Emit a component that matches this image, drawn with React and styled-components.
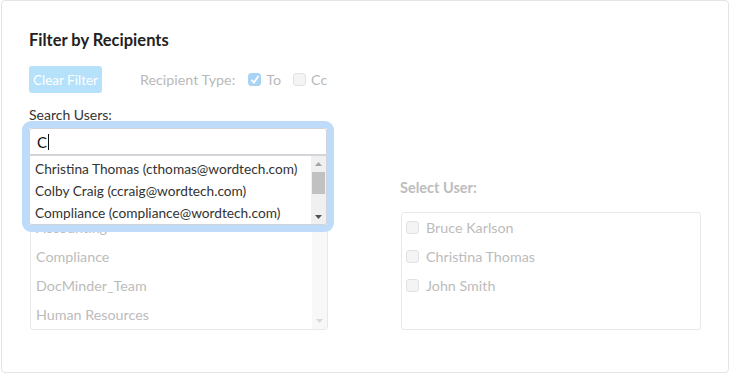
import React from "react";
import styled, { createGlobalStyle } from "styled-components";

const Global = createGlobalStyle`
  html, body {
    margin: 0;
    padding: 0;
    background: #ffffff;
  }
  body {
    font-family: "Lato", "Noto Sans", sans-serif;
    color: #333;
  }
`;

const Card = styled.div`
  box-sizing: border-box;
  width: 728px;
  height: 373px;
  margin-left: 1px;
  border: 1px solid #e2e4e6;
  border-radius: 4px;
  padding: 29px 27px 0 28px;
  background: white;
`;

const Title = styled.div`
  font-size: 16.5px;
  font-weight: bold;
  line-height: 20px;
  color: #222;
  margin-left: -1px;
`;

const Toolbar = styled.div`
  display: flex;
  align-items: center;
  margin-top: 16px;
  margin-left: -1px;
  height: 27px;
`;

const ClearButton = styled.button`
  box-sizing: border-box;
  height: 27px;
  width: 73px;
  padding: 0;
  border: none;
  border-radius: 3px;
  background: #b5e1fa;
  color: #ffffff;
  font-family: inherit;
  font-size: 13.5px;
`;

const TypeLabel = styled.span`
  margin-left: 38px;
  margin-right: 13px;
  font-size: 14.3px;
  color: #b9b9b9;
`;

const Check = styled.span`
  box-sizing: border-box;
  display: inline-flex;
  align-items: center;
  justify-content: center;
  width: 13px;
  height: 13px;
  border-radius: 3px;
  border: 1px solid ${(p) => (p.checked ? "#a9d3f5" : "#e2e2e2")};
  background: ${(p) => (p.checked ? "#a9d3f5" : "#f4f4f4")};
  flex-shrink: 0;
`;

const CheckText = styled.span`
  margin-left: 5px;
  margin-right: 12px;
  font-size: 14.3px;
  color: #b9b9b9;
`;

const FieldLabel = styled.div`
  margin-top: 13px;
  margin-left: -1px;
  font-size: 14px;
  line-height: 17px;
  color: #333;
`;

const SearchArea = styled.div`
  position: relative;
  margin-top: 5px;
  width: 298px;
  height: 27px;
`;

const FocusRing = styled.div`
  position: absolute;
  top: -7px;
  left: -8px;
  z-index: 5;
  width: 298px;
  border: 7px solid #bedcfa;
  border-radius: 9px;
  background: #ffffff;
`;

const SearchInput = styled.div`
  box-sizing: border-box;
  height: 27px;
  border: 1px solid #cfd4da;
  border-radius: 3px 3px 0 0;
  padding: 0 7px;
  display: flex;
  align-items: center;
  font-size: 15px;
  color: #111;
`;

const Caret = styled.span`
  display: inline-block;
  width: 1px;
  height: 16px;
  margin-left: 1px;
  background: #111;
`;

const Suggestions = styled.div`
  box-sizing: border-box;
  display: flex;
  height: 70px;
  border: 1px solid #cfd4da;
  border-top: 1px solid #d6d6d6;
  border-radius: 0 0 3px 3px;
  overflow: hidden;
`;

const SuggestionList = styled.div`
  flex: 1;
  padding-top: 2px;
`;

const Suggestion = styled.div`
  height: 22px;
  line-height: 22px;
  padding-left: 5px;
  font-size: 13.7px;
  color: #333;
  white-space: nowrap;
`;

const Scrollbar = styled.div`
  width: 15px;
  display: flex;
  flex-direction: column;
  align-items: center;
  background: ${(p) => (p.faded ? "#f8f8f8" : "#f0f0f0")};
`;

const ArrowButton = styled.div`
  height: ${(p) => p.size || 16}px;
  display: flex;
  align-items: center;
  justify-content: center;
`;

const Thumb = styled.div`
  width: 13px;
  height: 22px;
  margin-top: 1px;
  background: #c1c1c1;
`;

const Spacer = styled.div`
  flex: 1;
`;

const Columns = styled.div`
  display: grid;
  grid-template-columns: 298px 300px;
  column-gap: 73px;
  margin-top: 24px;
`;

const Column = styled.div`
  display: flex;
  flex-direction: column;
`;

const ColumnLabel = styled.div`
  font-size: 14.5px;
  font-weight: bold;
  line-height: 17px;
  color: #bdbdbd;
  margin-left: -1px;
`;

const ListBox = styled.div`
  box-sizing: border-box;
  display: flex;
  margin-top: 16px;
  height: 118px;
  border: 1px solid #e8e8e8;
  border-radius: 3px;
  overflow: hidden;
`;

const GroupList = styled.div`
  flex: 1;
`;

const GroupItem = styled.div`
  height: 29px;
  line-height: 29px;
  padding-left: 5px;
  font-size: 14.3px;
  color: #bcbcbc;
`;

const UserList = styled.div`
  flex: 1;
  padding: 0 0 0 4px;
`;

const UserRow = styled.div`
  display: flex;
  align-items: center;
  height: 29px;
`;

const UserName = styled.span`
  margin-left: 7px;
  font-size: 14.3px;
  color: #bcbcbc;
`;

const Arrow = ({ up, color }) => (
  <svg width="7" height="4" viewBox="0 0 7 4">
    <path d={up ? "M0 4 L3.5 0 L7 4 Z" : "M0 0 L7 0 L3.5 4 Z"} fill={color} />
  </svg>
);

const CheckMark = () => (
  <svg width="10" height="9" viewBox="0 0 10 9">
    <path d="M1.5 5 L4 7.5 L8.5 1" stroke="#fff" strokeWidth="1.8" fill="none" />
  </svg>
);

const suggestions = [
  "Christina Thomas (cthomas@wordtech.com)",
  "Colby Craig (ccraig@wordtech.com)",
  "Compliance (compliance@wordtech.com)",
];

const groups = ["Accounting", "Compliance", "DocMinder_Team", "Human Resources"];
const users = ["Bruce Karlson", "Christina Thomas", "John Smith"];

export default function App() {
  return (
    <>
      <Global />
      <Card>
        <Title>Filter by Recipients</Title>
        <Toolbar>
          <ClearButton>Clear Filter</ClearButton>
          <TypeLabel>Recipient Type:</TypeLabel>
          <Check checked>
            <CheckMark />
          </Check>
          <CheckText>To</CheckText>
          <Check />
          <CheckText>Cc</CheckText>
        </Toolbar>
        <FieldLabel>Search Users:</FieldLabel>
        <SearchArea>
          <FocusRing>
            <SearchInput>
              C<Caret />
            </SearchInput>
            <Suggestions>
              <SuggestionList>
                {suggestions.map((s) => (
                  <Suggestion key={s}>{s}</Suggestion>
                ))}
              </SuggestionList>
              <Scrollbar>
                <ArrowButton size={15}>
                  <Arrow up color="#a3a3a3" />
                </ArrowButton>
                <Thumb />
                <Spacer />
                <ArrowButton size={15}>
                  <Arrow color="#505050" />
                </ArrowButton>
              </Scrollbar>
            </Suggestions>
          </FocusRing>
        </SearchArea>
        <Columns>
          <Column>
            <ColumnLabel>Select Group:</ColumnLabel>
            <ListBox>
              <GroupList>
                {groups.map((g) => (
                  <GroupItem key={g}>{g}</GroupItem>
                ))}
              </GroupList>
              <Scrollbar faded>
                <Spacer />
                <ArrowButton size={17}>
                  <Arrow color="#d8d8d8" />
                </ArrowButton>
              </Scrollbar>
            </ListBox>
          </Column>
          <Column>
            <ColumnLabel>Select User:</ColumnLabel>
            <ListBox>
              <UserList>
                {users.map((u) => (
                  <UserRow key={u}>
                    <Check />
                    <UserName>{u}</UserName>
                  </UserRow>
                ))}
              </UserList>
            </ListBox>
          </Column>
        </Columns>
      </Card>
    </>
  );
}
